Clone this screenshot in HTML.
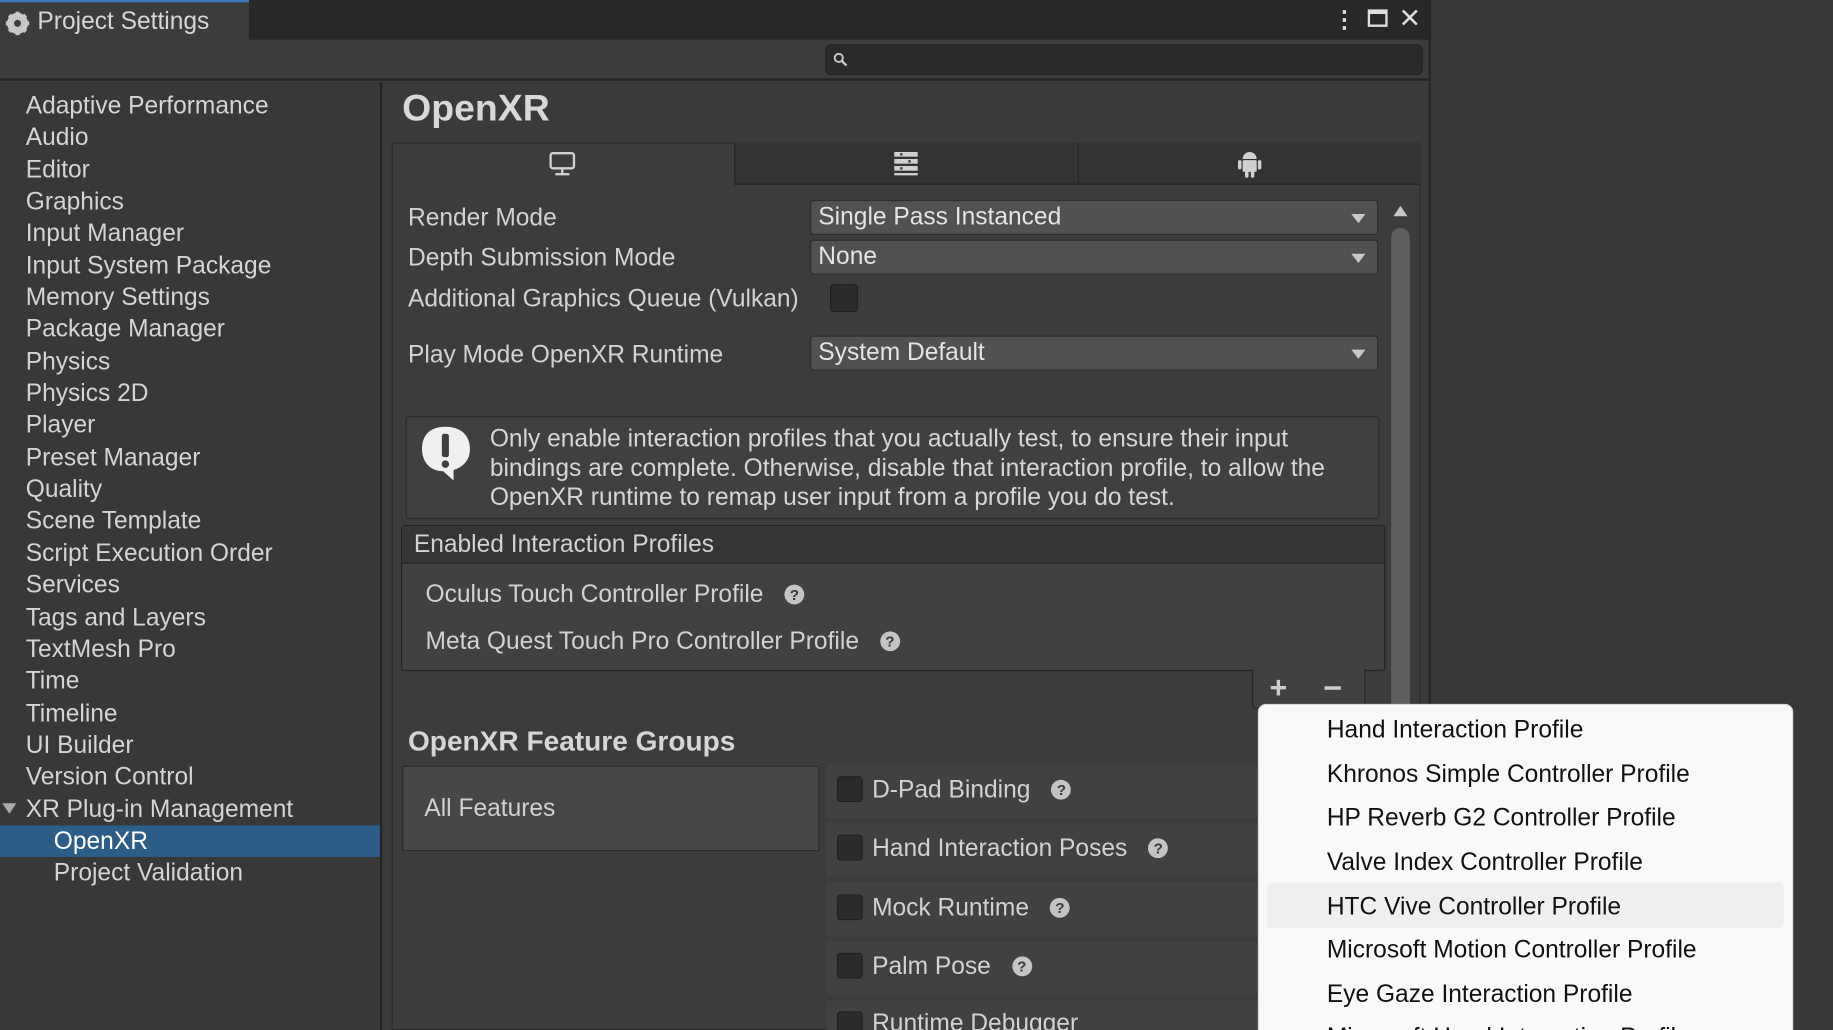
<!DOCTYPE html>
<html><head><meta charset="utf-8"><style>
*{margin:0;padding:0;box-sizing:border-box}
html,body{width:1833px;height:1030px;overflow:hidden;background:#383838}
#w{position:absolute;left:0;top:0;width:1833px;height:1030px;overflow:hidden}
#s{position:absolute;left:0;top:0;width:1568px;height:881px;overflow:hidden;transform:scale(1.16901,1.16913);transform-origin:0 0;font-family:"Liberation Sans",sans-serif;color:#d2d2d2;font-size:21px;background:#3a3a3a}
.a{position:absolute}
.t{position:absolute;white-space:nowrap}
.dd{position:absolute;left:693px;width:486px;height:30px;background:#515151;border:1px solid #2e2e2e;border-radius:3px;color:#e4e4e4;padding-left:6px;line-height:27px}
.dd:after{content:"";position:absolute;right:10px;top:11px;border-left:6px solid transparent;border-right:6px solid transparent;border-top:8px solid #c8c8c8}
.cb{position:absolute;width:22px;height:22px;background:#2b2b2b;border:1px solid #202020;border-radius:3px}
.q{display:inline-block;width:17px;height:17px;border-radius:50%;background:#c4c4c4;color:#383838;font-size:13px;font-weight:bold;text-align:center;line-height:17px;vertical-align:2px;margin-left:18px}
.fr{position:absolute;left:707px;width:370px;height:46px;background:#414141}
.mi{position:absolute;left:1135px;color:#111;font-size:21px;white-space:nowrap}
</style></head><body><div id="w"><div id="s">
<div class="a" style="left:0;top:0;width:1222px;height:34px;background:#282828"></div>
<div class="a" style="left:0;top:0;width:213px;height:34px;background:#3c3c3c;border-top:2px solid #3a79bb"></div>
<svg class="a" style="left:4px;top:9px" width="22" height="22" viewBox="0 0 22 22"><circle cx="11" cy="11" r="7" fill="none" stroke="#c8c8c8" stroke-width="4"/><g stroke="#c8c8c8" stroke-width="3.5"><line x1="11" y1="1" x2="11" y2="21"/><line x1="1" y1="11" x2="21" y2="11"/><line x1="4" y1="4" x2="18" y2="18"/><line x1="18" y1="4" x2="4" y2="18"/></g><circle cx="11" cy="11" r="3" fill="#3c3c3c"/></svg>
<div class="t" style="left:32px;top:7px;font-size:21px;color:#d6d6d6">Project Settings</div>
<div class="t" style="left:1140px;top:4px;color:#ddd;font-size:20px;font-weight:bold">⋮</div>
<div class="a" style="left:1170px;top:8px;width:17px;height:15px;border:2px solid #ddd;border-top-width:4px"></div>
<svg class="a" style="left:1198px;top:7px" width="16" height="16"><path d="M2 2L14 14M14 2L2 14" stroke="#ddd" stroke-width="2.2"/></svg>
<div class="a" style="left:0;top:34px;width:1222px;height:35px;background:#3c3c3c;border-bottom:2px solid #232323"></div>
<div class="a" style="left:706px;top:38px;width:511px;height:26px;background:#2a2a2a;border:1px solid #212121;border-radius:4px"></div>
<svg class="a" style="left:712px;top:44px" width="14" height="14"><circle cx="5.5" cy="5.5" r="3.5" fill="none" stroke="#ccc" stroke-width="1.6"/><line x1="8" y1="8" x2="12" y2="12" stroke="#ccc" stroke-width="2"/></svg>
<div class="a" style="left:1222px;top:0;width:346px;height:881px;background:#383838;border-left:2px solid #252525"></div>
<div class="a" style="left:0;top:70px;width:325px;height:811px;background:#383838"></div>
<div class="a" style="left:325px;top:70px;width:2px;height:811px;background:#232323"></div>
<div class="a" style="left:0;top:706px;width:325px;height:27px;background:#2c5d87"></div>
<div style="position:absolute;left:22px;top:77px;line-height:27.35px;font-size:21px;color:#d4d4d4">
Adaptive Performance<br>Audio<br>Editor<br>Graphics<br>Input Manager<br>Input System Package<br>Memory Settings<br>Package Manager<br>Physics<br>Physics 2D<br>Player<br>Preset Manager<br>Quality<br>Scene Template<br>Script Execution Order<br>Services<br>Tags and Layers<br>TextMesh Pro<br>Time<br>Timeline<br>UI Builder<br>Version Control<br>XR Plug-in Management<br><span style="margin-left:24px;color:#fff">OpenXR</span><br><span style="margin-left:24px">Project Validation</span></div>
<div class="a" style="left:2px;top:687px;border-left:6px solid transparent;border-right:6px solid transparent;border-top:9px solid #aaa"></div>
<div class="t" style="left:344px;top:74px;font-size:32px;font-weight:bold;color:#d8d8d8">OpenXR</div>
<div class="a" style="left:335px;top:122px;width:880px;height:759px;background:#3c3c3c;border:1px solid #2a2a2a;border-radius:3px 3px 0 0"></div>
<div class="a" style="left:628px;top:122px;width:587px;height:36px;background:#333;border-bottom:1px solid #232323;border-left:1px solid #232323"></div>
<div class="a" style="left:922px;top:123px;width:1px;height:35px;background:#262626"></div>
<svg class="a" style="left:469px;top:129px" width="24" height="22"><rect x="2" y="2" width="20" height="13" rx="2" fill="none" stroke="#d0d0d0" stroke-width="2"/><path d="M12 15v4M6 20h12" stroke="#d0d0d0" stroke-width="2"/></svg>
<svg class="a" style="left:764px;top:129px" width="22" height="22" fill="#d0d0d0"><rect x="1" y="1" width="20" height="4"/><rect x="1" y="7" width="20" height="4"/><rect x="1" y="13" width="20" height="4"/><rect x="1" y="19" width="20" height="2"/><g fill="#333"><rect x="6" y="2" width="2" height="2"/><rect x="13" y="8" width="2" height="2"/><rect x="6" y="14" width="2" height="2"/></g></svg>
<svg class="a" style="left:1058px;top:127px" width="22" height="26" fill="#d0d0d0"><path d="M5 9a6 6 0 0 1 12 0z"/><rect x="5" y="10" width="12" height="10" rx="1"/><rect x="1" y="10" width="3" height="8" rx="1.5"/><rect x="18" y="10" width="3" height="8" rx="1.5"/><rect x="7" y="19" width="3" height="6" rx="1.5"/><rect x="12" y="19" width="3" height="6" rx="1.5"/></svg>
<div class="a" style="left:1188px;top:170px;width:20px;height:711px;background:#3c3c3c"></div>
<div class="a" style="left:1192px;top:176px;border-left:6px solid transparent;border-right:6px solid transparent;border-bottom:9px solid #c8c8c8"></div>
<div class="a" style="left:1190px;top:195px;width:16px;height:700px;background:#5e5e5e;border-radius:8px"></div>
<div class="t" style="left:349px;top:175px">Render Mode</div>
<div class="dd" style="top:171px">Single Pass Instanced</div>
<div class="t" style="left:349px;top:209px">Depth Submission Mode</div>
<div class="dd" style="top:205px">None</div>
<div class="t" style="left:349px;top:244px">Additional Graphics Queue (Vulkan)</div>
<div class="cb" style="left:710px;top:243px;width:24px;height:24px"></div>
<div class="t" style="left:349px;top:292px">Play Mode OpenXR Runtime</div>
<div class="dd" style="top:287px">System Default</div>
<div class="a" style="left:347px;top:356px;width:833px;height:88px;background:#404040;border:1px solid #2a2a2a;border-radius:3px"></div>
<svg class="a" style="left:358px;top:362px" width="46" height="50"><path d="M23 3C10 3 3 10 3 22c0 11 7 19 18 19l9 8v-9c9-3 14-9 14-18C44 10 36 3 23 3z" fill="#efefef"/><rect x="20" y="9" width="6" height="20" rx="2" fill="#404040"/><circle cx="23" cy="35" r="3.2" fill="#404040"/></svg>
<div class="a" style="left:419px;top:363px;width:745px;font-size:21px;line-height:25px;color:#d6d6d6">Only enable interaction profiles that you actually test, to ensure their input bindings are complete. Otherwise, disable that interaction profile, to allow the OpenXR runtime to remap user input from a profile you do test.</div>
<div class="a" style="left:343px;top:449px;width:842px;height:125px;background:#414141;border:1px solid #242424;border-radius:3px"></div>
<div class="a" style="left:344px;top:450px;width:840px;height:32px;background:#353535;border-bottom:1px solid #242424"></div>
<div class="t" style="left:354px;top:454px">Enabled Interaction Profiles</div>
<div class="t" style="left:364px;top:497px">Oculus Touch Controller Profile<span class="q">?</span></div>
<div class="t" style="left:364px;top:537px">Meta Quest Touch Pro Controller Profile<span class="q">?</span></div>
<div class="a" style="left:1071px;top:572px;width:97px;height:34px;background:#414141;border:1px solid #242424;border-top:none;border-radius:0 0 3px 3px"></div>
<div class="t" style="left:1086px;top:573px;font-size:26px;color:#ccc;font-weight:bold">+</div>
<div class="a" style="left:1133px;top:587px;width:14px;height:3px;background:#ccc"></div>
<div class="t" style="left:349px;top:621px;font-size:24px;font-weight:bold;color:#d6d6d6">OpenXR Feature Groups</div>
<div class="a" style="left:344px;top:655px;width:357px;height:73px;background:#474747;border:1px solid #2c2c2c"></div>
<div class="t" style="left:363px;top:680px;color:#d0d0d0">All Features</div>
<div class="fr" style="top:654px"></div>
<div class="fr" style="top:704px"></div>
<div class="fr" style="top:755px"></div>
<div class="fr" style="top:805px"></div>
<div class="fr" style="top:856px"></div>
<div class="cb" style="left:716px;top:664px"></div><div class="t" style="left:746px;top:664px">D-Pad Binding<span class="q">?</span></div>
<div class="cb" style="left:716px;top:714px"></div><div class="t" style="left:746px;top:714px">Hand Interaction Poses<span class="q">?</span></div>
<div class="cb" style="left:716px;top:765px"></div><div class="t" style="left:746px;top:765px">Mock Runtime<span class="q">?</span></div>
<div class="cb" style="left:716px;top:815px"></div><div class="t" style="left:746px;top:815px">Palm Pose<span class="q">?</span></div>
<div class="cb" style="left:716px;top:865px"></div><div class="t" style="left:746px;top:864px">Runtime Debugger</div>
<div class="a" style="left:1076px;top:602px;width:458px;height:330px;background:#f9f9f9;border:1px solid #d8d8d8;border-radius:7px"></div>
<div class="a" style="left:1084px;top:755px;width:442px;height:39px;background:#efefef;border-radius:4px"></div>
<div class="mi" style="top:613px">Hand Interaction Profile</div>
<div class="mi" style="top:651px">Khronos Simple Controller Profile</div>
<div class="mi" style="top:688px">HP Reverb G2 Controller Profile</div>
<div class="mi" style="top:726px">Valve Index Controller Profile</div>
<div class="mi" style="top:764px">HTC Vive Controller Profile</div>
<div class="mi" style="top:801px">Microsoft Motion Controller Profile</div>
<div class="mi" style="top:839px">Eye Gaze Interaction Profile</div>
<div class="mi" style="top:876px">Microsoft Hand Interaction Profile</div>
</div></div></body></html>
